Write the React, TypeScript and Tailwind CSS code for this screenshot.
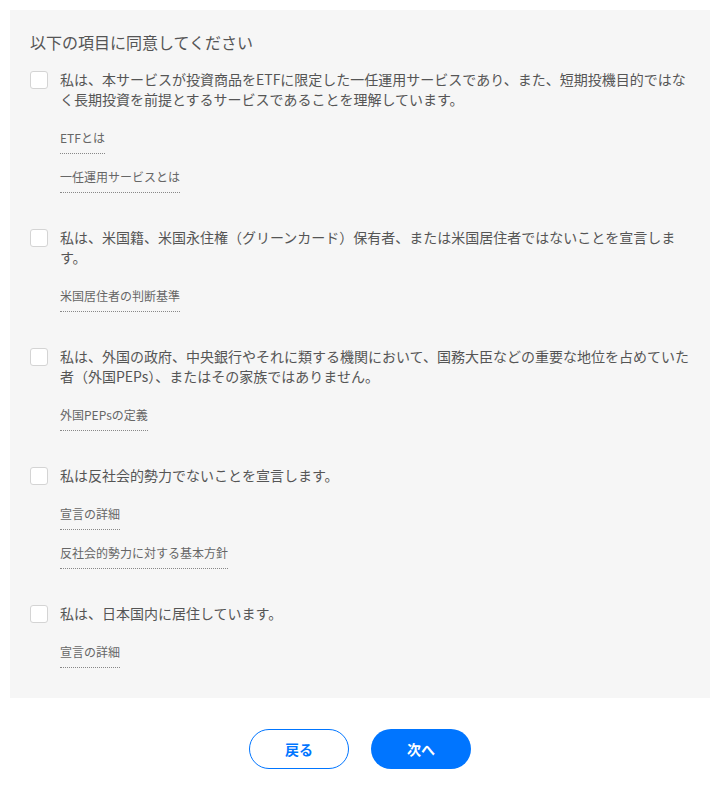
import { useState } from "react";

type Item = {
  id: string;
  text: string;
  links: string[];
};

const items: Item[] = [
  {
    id: "etf",
    text: "私は、本サービスが投資商品をETFに限定した一任運用サービスであり、また、短期投機目的ではなく長期投資を前提とするサービスであることを理解しています。",
    links: ["ETFとは", "一任運用サービスとは"],
  },
  {
    id: "us",
    text: "私は、米国籍、米国永住権（グリーンカード）保有者、または米国居住者ではないことを宣言します。",
    links: ["米国居住者の判断基準"],
  },
  {
    id: "peps",
    text: "私は、外国の政府、中央銀行やそれに類する機関において、国務大臣などの重要な地位を占めていた者（外国PEPs）、またはその家族ではありません。",
    links: ["外国PEPsの定義"],
  },
  {
    id: "antisocial",
    text: "私は反社会的勢力でないことを宣言します。",
    links: ["宣言の詳細", "反社会的勢力に対する基本方針"],
  },
  {
    id: "japan",
    text: "私は、日本国内に居住しています。",
    links: ["宣言の詳細"],
  },
];

export default function App() {
  const [checked, setChecked] = useState<string[]>([]);

  const toggle = (id: string) => {
    if (checked.includes(id)) {
      setChecked(checked.filter((c) => c !== id));
    } else {
      setChecked([...checked, id]);
    }
  };

  return (
    <div
      className="min-h-screen bg-white pt-[10px] pr-4 pl-[10px] text-[#555]"
      style={{ fontFamily: '"Noto Sans CJK JP", "Noto Sans", sans-serif' }}
    >
      {/* Agreement panel */}
      <div className="bg-[#f6f6f6] px-5 pt-5 pb-[30px]">
        <h2 className="mb-[15px] text-[16px] leading-6 text-[#555]">
          以下の項目に同意してください
        </h2>

        <div className="flex flex-col gap-[34px]">
          {items.map((item) => (
            <div key={item.id} className="flex flex-col">
              <label className="flex cursor-pointer items-start gap-3">
                <input
                  type="checkbox"
                  checked={checked.includes(item.id)}
                  onChange={() => toggle(item.id)}
                  className="mt-[2px] h-[18px] w-[18px] shrink-0 appearance-none rounded-[3px] border border-[#d4d4d4] bg-white checked:border-[#0075ff] checked:bg-[#0075ff]"
                />
                <span className="text-[14px] leading-5 text-[#555]">
                  {item.text}
                </span>
              </label>

              <div className="mt-5 flex flex-col items-start gap-[14px] pl-[30px]">
                {item.links.map((link) => (
                  <a
                    key={link}
                    href="#"
                    className="inline-block border-b border-dotted border-[#888] pb-[6px] text-[12px] leading-[18px] text-[#666]"
                  >
                    {link}
                  </a>
                ))}
              </div>
            </div>
          ))}
        </div>
      </div>

      {/* Buttons */}
      <div className="mt-[31px] flex justify-center gap-[22px]">
        <button className="h-10 w-[100px] rounded-full border border-[#0075ff] bg-white text-[14px] font-bold text-[#0075ff]">
          戻る
        </button>
        <button className="h-10 w-[100px] rounded-full bg-[#0075ff] text-[14px] font-bold text-white">
          次へ
        </button>
      </div>
    </div>
  );
}
